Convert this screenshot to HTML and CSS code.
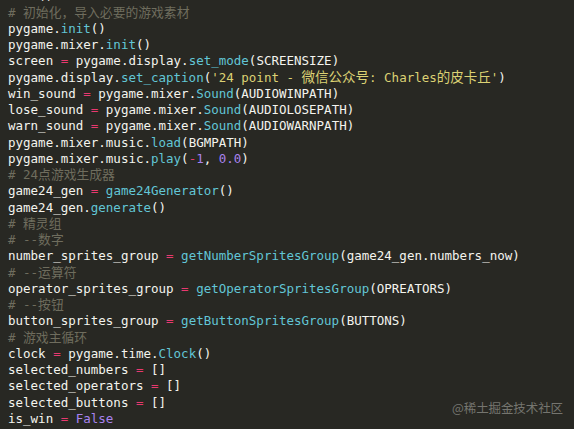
FILE: index.html
```html
<!DOCTYPE html>
<html lang="zh">
<head>
<meta charset="utf-8">
<title>code</title>
<link rel="stylesheet" href="styles.css">
</head>
<body>
<div class="editor">
  <div class="code">
    <div class="ln">main()</div>
    <div class="ln c"># <span class="h">初始化，导入必要的游戏素材</span></div>
    <div class="ln">pygame.<span class="f">init</span>()</div>
    <div class="ln">pygame.mixer.<span class="f">init</span>()</div>
    <div class="ln">screen <span class="k">=</span> pygame.display.<span class="f">set_mode</span>(SCREENSIZE)</div>
    <div class="ln">pygame.display.<span class="f">set_caption</span>(<span class="s">'24 point - <span class="h hs">微信公众号</span>: Charles<span class="h hs">的皮卡丘</span>'</span>)</div>
    <div class="ln">win_sound <span class="k">=</span> pygame.mixer.<span class="f">Sound</span>(AUDIOWINPATH)</div>
    <div class="ln">lose_sound <span class="k">=</span> pygame.mixer.<span class="f">Sound</span>(AUDIOLOSEPATH)</div>
    <div class="ln">warn_sound <span class="k">=</span> pygame.mixer.<span class="f">Sound</span>(AUDIOWARNPATH)</div>
    <div class="ln">pygame.mixer.music.<span class="f">load</span>(BGMPATH)</div>
    <div class="ln">pygame.mixer.music.<span class="f">play</span>(<span class="k">-</span><span class="n">1</span>, <span class="n">0.0</span>)</div>
    <div class="ln c"># 24<span class="h">点游戏生成器</span></div>
    <div class="ln">game24_gen <span class="k">=</span> <span class="f">game24Generator</span>()</div>
    <div class="ln">game24_gen.<span class="f">generate</span>()</div>
    <div class="ln c"># <span class="h">精灵组</span></div>
    <div class="ln c"># --<span class="h">数字</span></div>
    <div class="ln">number_sprites_group <span class="k">=</span> <span class="f">getNumberSpritesGroup</span>(game24_gen.numbers_now)</div>
    <div class="ln c"># --<span class="h">运算符</span></div>
    <div class="ln">operator_sprites_group <span class="k">=</span> <span class="f">getOperatorSpritesGroup</span>(OPREATORS)</div>
    <div class="ln c"># --<span class="h">按钮</span></div>
    <div class="ln">button_sprites_group <span class="k">=</span> <span class="f">getButtonSpritesGroup</span>(BUTTONS)</div>
    <div class="ln c"># <span class="h">游戏主循环</span></div>
    <div class="ln">clock <span class="k">=</span> pygame.time.<span class="f">Clock</span>()</div>
    <div class="ln">selected_numbers <span class="k">=</span> []</div>
    <div class="ln">selected_operators <span class="k">=</span> []</div>
    <div class="ln">selected_buttons <span class="k">=</span> []</div>
    <div class="ln">is_win <span class="k">=</span> <span class="n">False</span></div>
  </div>
  <div class="mark">@稀土掘金技术社区</div>
</div>
</body>
</html>
```

FILE: styles.css
```css
html, body {
  margin: 0;
  padding: 0;
  background: #282823;
}
body {
  width: 574px;
  height: 429px;
  overflow: hidden;
}
.editor {
  position: relative;
  width: 574px;
  height: 429px;
  overflow: hidden;
  background: #282823;
}
.code {
  margin-top: -11.6px;
  padding-left: 8px;
  font-family: "DejaVu Sans Mono", "Liberation Mono", "Noto Sans CJK SC", monospace;
  font-size: 12.5px;
  color: #f4f4ee;
}
.ln {
  height: 16.25px;
  line-height: 16.25px;
  white-space: pre;
  overflow: visible;
}
.h {
  font-family: "Noto Sans CJK SC", sans-serif;
  font-size: 12.8px;
  line-height: 1;
}
.hs {
  font-size: 13.5px;
}
.c { color: #6f6d5e; }
.f { color: #62c6d6; }
.k { color: #e8396f; }
.s { color: #dcd274; }
.n { color: #a883f0; }
.mark {
  position: absolute;
  left: 452px;
  top: 399px;
  white-space: nowrap;
  font-family: "Noto Sans CJK SC", sans-serif;
  font-size: 12.5px;
  line-height: 17px;
  color: #75756f;
  letter-spacing: -0.1px;
}
```
